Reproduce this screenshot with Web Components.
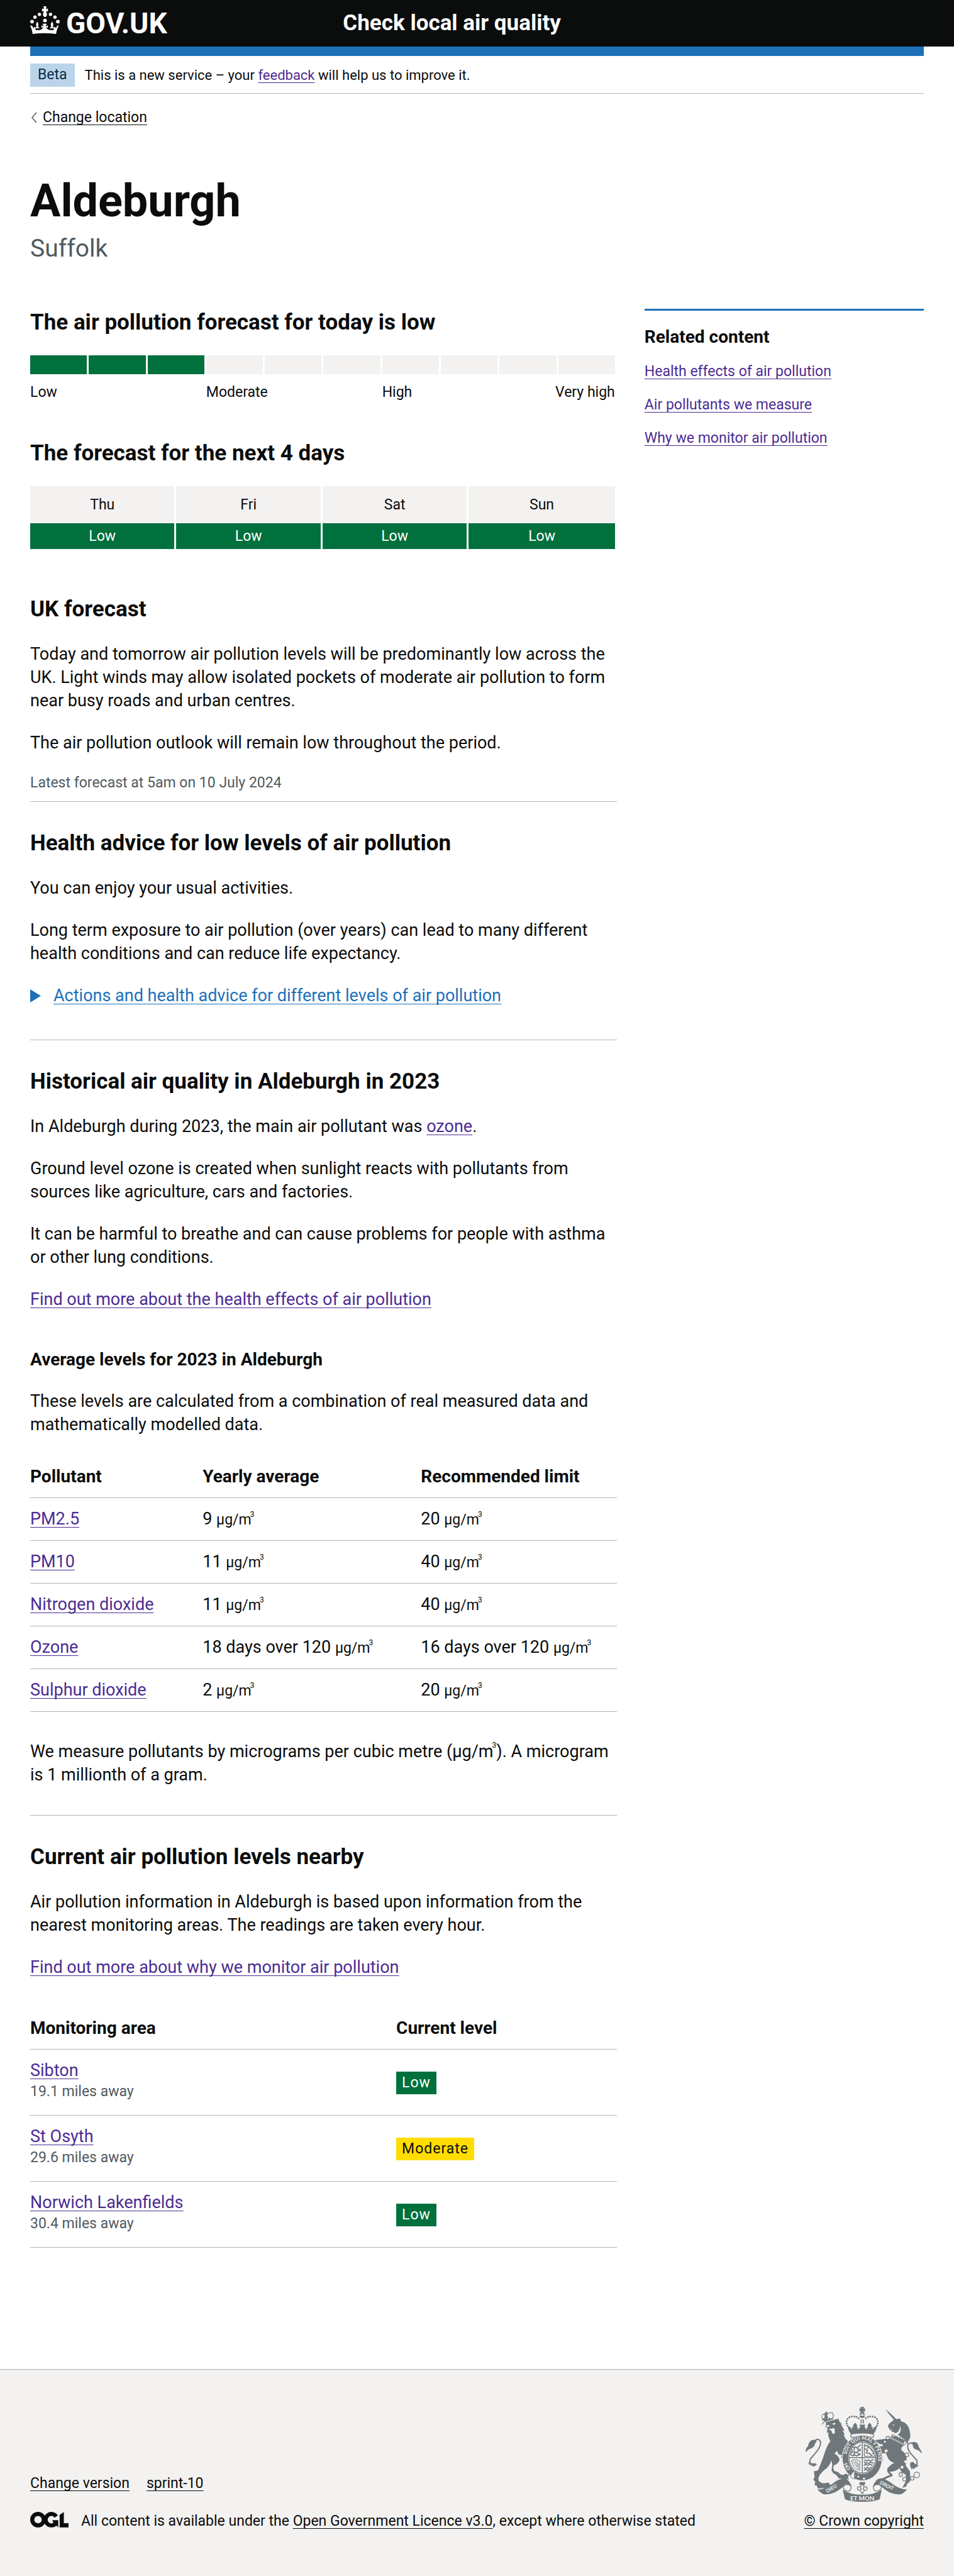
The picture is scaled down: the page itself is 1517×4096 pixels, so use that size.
<!DOCTYPE html>
<html lang="en">
<head>
<meta charset="utf-8">
<meta name="viewport" content="width=device-width, initial-scale=1">
<title>Air quality in Aldeburgh – Check local air quality</title>
<style>
  :root {
    --ink: #0b0c0c; --muted: #505a5f; --blue: #1d70b8; --visited: #4c2c92;
    --green: #00703c; --yellow: #ffdd00; --line: #b1b4b6; --pale: #f3f2f1;
    --gutter: 48px;
  }
  body { margin: 0; background: #fff; color: var(--ink); font: 27px/37px Roboto, "Liberation Sans", sans-serif; }
</style>
</head>
<body>
<air-page>
  <site-header slot="header" service="Check local air quality"></site-header>
  <phase-banner slot="header"></phase-banner>
  <back-link slot="header" href="#locations">Change location</back-link>
  <place-heading slot="header" place="Aldeburgh" region="Suffolk"></place-heading>

  <today-scale level="3" label="low"></today-scale>
  <day-forecast days="Thu,Fri,Sat,Sun" levels="Low,Low,Low,Low"></day-forecast>
  <uk-forecast></uk-forecast>
  <health-advice></health-advice>
  <historical-quality></historical-quality>
  <nearby-levels></nearby-levels>

  <related-content slot="aside"></related-content>
  <site-footer slot="footer"></site-footer>
</air-page>

<script>
const base = `
  * { box-sizing: border-box; }
  :host { display: block; }
  h1, h2, h3, p, ul, table { margin: 0; padding: 0; }
  ul { list-style: none; }
  h2 { font-size: 35px; line-height: 44px; font-weight: 700; margin-bottom: 31px; }
  h3 { font-size: 28px; line-height: 37px; font-weight: 700; margin-bottom: 30px; }
  p + p { margin-top: 30px; }
  a { color: var(--visited); text-decoration: underline 1px; text-underline-offset: 4px; text-decoration-skip-ink: none; }
  .plain { color: var(--ink); }
  .small { font-size: 23px; line-height: 30px; }
  .muted { color: var(--muted); }
  .ruled { border-top: 1px solid var(--line); padding-top: 44px; }
  table { width: 100%; border-collapse: separate; border-spacing: 0; table-layout: fixed; text-align: left; }
  th { font-size: 28px; font-weight: 700; }
  th, td { padding: 15px 15px 15px 0; border-bottom: 1px solid var(--line); line-height: 37px; }
  .unit { font-size: 23px; line-height: 23px; white-space: nowrap; }
  sup { font-size: 12px; line-height: 0; vertical-align: 12px; margin-left: -2px; }
`;

function define(name, css, html) {
  customElements.define(name, class extends HTMLElement {
    connectedCallback() {
      if (this.shadowRoot) return;
      const template = document.createElement('template');
      template.innerHTML = `<style>${base}${css}</style>${typeof html === 'function' ? html(this) : html}`;
      this.attachShadow({ mode: 'open' }).append(template.content.cloneNode(true));
    }
  });
}

define('air-page', `
  .columns { display: grid; grid-template-columns: 21fr 10fr; gap: 44px; align-items: start; padding: 74px var(--gutter) 193px; }
  main { min-width: 0; }
`, `
  <slot name="header"></slot>
  <div class="columns"><main><slot></slot></main><slot name="aside"></slot></div>
  <slot name="footer"></slot>
`);

define('site-header', `
  header { background: var(--ink); color: #fff; padding: 10px var(--gutter); display: grid; grid-template-columns: 35% 65%; }
  a { color: #fff; text-decoration: none; font-weight: 700; line-height: 54px; }
  .logo { display: flex; gap: 10px; font-size: 46px; }
  .logo svg { width: 47px; height: 44px; flex: none; }
  .service { font-size: 35px; }
  .bar { height: 15px; margin: 0 var(--gutter); background: var(--blue); }
`, host => `
  <header>
    <a class="logo" href="#home" aria-label="GOV.UK"><svg viewBox="72 42 192 179" fill="#fff" aria-hidden="true">
      <circle cx="84" cy="141" r="12"/><circle cx="103" cy="112" r="11"/><circle cx="132" cy="94" r="11"/>
      <circle cx="204" cy="94" r="11"/><circle cx="233" cy="112" r="11"/><circle cx="252" cy="141" r="12"/>
      <circle cx="168" cy="134" r="12"/>
      <path d="M158 42h20l-4 18 13-4v20l-12-4c1 8 6 14 6 24 0 9-6 15-13 15s-13-6-13-15c0-10 5-16 6-24l-12 4V56l13 4z"/>
      <path d="M74 166l17 5-5 3 9 12 1-10 9 1c-2 14 4 21 10 20 6-1 6-8 1-14-5 0-8 3-9 6-3-9 1-15 8-14-9-13-4-24 3-33 7 9 12 20 3 33 7-1 11 5 8 14-1-3-4-6-9-6-4 8-2 14 4 14 15 0 28-8 35-20-6 0-10 3-13 7v-20c3 4 8 6 14 6l-8-15h28l-8 15c6 0 11-2 14-6v20c-3-4-7-7-13-7 7 12 20 20 35 20 6 0 8-6 4-14-5 0-8 3-9 6-3-9 1-15 8-14-9-13-4-24 3-33 7 9 12 20 3 33 7-1 11 5 8 14-1-3-4-6-9-6-5 6-5 13 1 14 6 1 12-6 10-20l9-1 1 10 9-12-5-3 17-5c-9 17-15 35-18 55q-76-9-152 0c-3-20-8-38-17-55z"/>
    </svg><span>GOV.UK</span></a>
    <a class="service" href="#service">${host.getAttribute('service')}</a>
  </header>
  <div class="bar"></div>
`);

define('phase-banner', `
  :host { margin: 0 var(--gutter); padding: 12px 0 10px; border-bottom: 1px solid var(--line); }
  .row { display: flex; align-items: center; gap: 16px; }
  .row span { font-size: 22px; }
  strong { font-weight: 400; background: #bbd4ea; color: #0c2d4a; padding: 3px 12px 4px; }
`, `<div class="row small"><strong>Beta</strong><span>This is a new service – your <a href="#feedback">feedback</a> will help us to improve it.</span></div>`);

define('back-link', `
  :host { padding: 23px var(--gutter) 0; }
  .row { display: flex; align-items: center; gap: 9px; }
  svg { width: 11px; height: 18px; }
`, host => `
  <div class="row small">
    <svg viewBox="0 0 11 18" fill="none" stroke="#505a5f" stroke-width="1.5" aria-hidden="true"><path d="M10 1L3 9l7 8"/></svg>
    <a class="plain" href="${host.getAttribute('href')}"><slot></slot></a>
  </div>
`);

define('place-heading', `
  :host { padding: 81px var(--gutter) 0; }
  h1 { font-size: 72px; line-height: 74px; margin-bottom: 16px; }
  p { font-size: 39px; line-height: 44px; }
`, host => `<h1>${host.getAttribute('place')}</h1><p class="muted">${host.getAttribute('region')}</p>`);

define('today-scale', `
  h2 { margin-bottom: 30px; }
  .bar, .labels { display: grid; grid-template-columns: repeat(10, minmax(0, 1fr)); gap: 3px; margin-right: 3px; }
  .bar i { height: 30px; background: var(--pale); }
  .bar i.on { background: var(--green); }
  .labels { margin-top: 14px; white-space: nowrap; }
  .labels span { grid-column: span 3; }
  .labels span:nth-child(n+3) { grid-column: span 2; }
  .labels span:last-child { text-align: right; }
`, host => `
  <h2>The air pollution forecast for today is ${host.getAttribute('label')}</h2>
  <div class="bar">${Array.from({ length: 10 }, (_, i) => `<i${i < +host.getAttribute('level') ? ' class="on"' : ''}></i>`).join('')}</div>
  <div class="labels small"><span>Low</span><span>Moderate</span><span>High</span><span>Very high</span></div>
`);

define('day-forecast', `
  :host { margin-top: 60px; }
  h2 { margin-bottom: 30px; }
  .wrap { margin-right: 3px; }
  th, td { font-size: 23px; font-weight: 400; text-align: center; border: 0; border-right: 3px solid #fff; line-height: 30px; }
  th:last-child, td:last-child { border-right: 0; }
  th { background: var(--pale); padding: 15px 0 14px; }
  td { background: var(--green); color: #fff; padding: 6px 0 5px; }
`, host => {
  const cells = (attr, tag) => host.getAttribute(attr).split(',').map(t => `<${tag}>${t}</${tag}>`).join('');
  return `<h2>The forecast for the next 4 days</h2>
    <div class="wrap"><table><thead><tr>${cells('days', 'th')}</tr></thead><tbody><tr>${cells('levels', 'td')}</tr></tbody></table></div>`;
});

define('uk-forecast', `
  :host { margin-top: 74px; padding-bottom: 14px; }
`, `
  <h2>UK forecast</h2>
  <p>Today and tomorrow air pollution levels will be predominantly low across the UK. Light winds may allow isolated pockets of moderate air pollution to form near busy roads and urban centres.</p>
  <p>The air pollution outlook will remain low throughout the period.</p>
  <p class="small muted">Latest forecast at 5am on 10 July 2024</p>
`);

define('health-advice', `
  :host { padding-bottom: 51px; }
  details { margin-top: 30px; }
  summary { display: flex; align-items: center; gap: 20px; color: var(--blue); cursor: pointer; list-style: none; }
  summary span { text-decoration: underline 1px; text-underline-offset: 4px; text-decoration-skip-ink: none; }
  svg { width: 17px; height: 21px; flex: none; }
`, `
  <div class="ruled">
    <h2>Health advice for low levels of air pollution</h2>
    <p>You can enjoy your usual activities.</p>
    <p>Long term exposure to air pollution (over years) can lead to many different health conditions and can reduce life expectancy.</p>
    <details><summary><svg viewBox="0 0 17 21" fill="#1d70b8" aria-hidden="true"><path d="M0 0l17 10.500L0 21z"/></svg><span>Actions and health advice for different levels of air pollution</span></summary></details>
  </div>
`);

const unit = '<span class="unit">µg/m<sup>3</sup></span>';
const pollutants = [
  ['PM2.5', '9', '20'], ['PM10', '11', '40'], ['Nitrogen dioxide', '11', '40'],
  ['Ozone', '18 days over 120', '16 days over 120'], ['Sulphur dioxide', '2', '20'],
];

define('historical-quality', `
  :host { padding-bottom: 45px; }
  h3 { margin-top: 58px; }
  table { margin: 30px 0 45px; }
  th:first-child { width: 29.4%; }
  th:nth-child(2) { width: 37.2%; }
  th:last-child { width: 33.4%; }
  th, td { padding-right: 0; }
  p sup { vertical-align: 15px; }
`, `
  <div class="ruled">
    <h2>Historical air quality in Aldeburgh in 2023</h2>
    <p>In Aldeburgh during 2023, the main air pollutant was <a href="#ozone">ozone</a>.</p>
    <p>Ground level ozone is created when sunlight reacts with pollutants from sources like agriculture, cars and factories.</p>
    <p>It can be harmful to breathe and can cause problems for people with asthma or other lung conditions.</p>
    <p><a href="#health-effects">Find out more about the health effects of air pollution</a></p>
    <h3>Average levels for 2023 in Aldeburgh</h3>
    <p>These levels are calculated from a combination of real measured data and mathematically modelled data.</p>
    <table>
      <thead><tr><th>Pollutant</th><th>Yearly average</th><th>Recommended limit</th></tr></thead>
      <tbody>${pollutants.map(([n, a, l]) => `<tr><td><a href="#pollutant">${n}</a></td><td>${a} ${unit}</td><td>${l} ${unit}</td></tr>`).join('')}</tbody>
    </table>
    <p>We measure pollutants by micrograms per cubic metre (µg/m<sup>3</sup>). A microgram is 1 millionth of a gram.</p>
  </div>
`);

const areas = [['Sibton', '19.1', 'Low'], ['St Osyth', '29.6', 'Moderate'], ['Norwich Lakenfields', '30.4', 'Low']];

define('nearby-levels', `
  table { margin-top: 44px; }
  th:first-child { width: 62.4%; }
  th:last-child { width: 37.6%; }
  td { padding-bottom: 22px; vertical-align: top; }
  td:last-child { vertical-align: middle; padding: 0; }
  .distance { display: block; }
  .tag { display: inline-block; padding: 3px 9px; background: var(--green); color: #fff; letter-spacing: 1px; vertical-align: middle; }
  .tag.moderate { background: var(--yellow); color: var(--ink); }
`, `
  <div class="ruled">
    <h2>Current air pollution levels nearby</h2>
    <p>Air pollution information in Aldeburgh is based upon information from the nearest monitoring areas. The readings are taken every hour.</p>
    <p><a href="#monitoring">Find out more about why we monitor air pollution</a></p>
    <table>
      <thead><tr><th>Monitoring area</th><th>Current level</th></tr></thead>
      <tbody>${areas.map(([n, d, l]) => `<tr><td><a href="#area">${n}</a><span class="distance small muted">${d} miles away</span></td><td><span class="tag small ${l.toLowerCase()}">${l}</span></td></tr>`).join('')}</tbody>
    </table>
  </div>
`);

define('related-content', `
  aside { border-top: 3px solid var(--blue); padding-top: 23px; }
  h3 { margin-bottom: 22px; }
  ul { display: grid; gap: 23px; }
`, `
  <aside>
    <h3>Related content</h3>
    <ul class="small">
      <li><a href="#health-effects">Health effects of air pollution</a></li>
      <li><a href="#pollutants">Air pollutants we measure</a></li>
      <li><a href="#monitoring">Why we monitor air pollution</a></li>
    </ul>
  </aside>
`);

define('royal-arms', `
  svg { display: block; width: 185px; height: 151px; }
  text { font: 700 32px Lato, sans-serif; fill: #f3f2f1; }
`, `
  <svg viewBox="204 197 751 613" fill="#6f777b" aria-hidden="true">
    <!-- crown -->
    <path d="M557 198h26l-6 13 11-7v25l-11-7 6 14h-26l6-14-11 7v-25l11 7zM551 248q4-15 16-18v18zM572 230q12 3 16 18h-16zM551 254h37q-2 14-18 16-17-2-19-16z"/>
    <g fill="none" stroke="#6f777b" stroke-width="12" stroke-linecap="round" stroke-dasharray="0 15.500">
      <path d="M484 331C456 305 466 262 505 260q34-3 44 16"/><path d="M655 331c28-26 18-69-21-71q-34-3-44 16"/>
    </g>
    <path d="M559 278h7v27h-7zM573 278h7v27h-7z"/>
    <path d="M477 322l14 6q9 13 17 13l-8-13h14l-5-11 15-18 14 18-5 11h10l-5 14q11-1 18-13l-4-17h37l-4 17q7 12 18 13l-5-14h10l-5-11 14-18 15 18-5 11h14l-8 13q8 0 17-13l14-6q-2 25-22 52-71-15-145 0-20-27-20-52z"/>
    <path d="M499 373q71-12 142 0 7 10-2 21-69-17-139 0-9-11-1-21z" fill="#f3f2f1" stroke="#6f777b" stroke-width="5"/>
    <!-- lion -->
    <g fill="none" stroke="#6f777b" stroke-width="8" stroke-dasharray="1 12" stroke-linecap="round"><path d="M314 282q-14-34 12-40l50-8q12 16 4 38"/></g>
    <path d="M331 233l6-7 7 5-3 9 10 2-8 8 8 20-26 6 2-25-8-6 11-3zM312 272l14-3 3 9 12-11 6 11 12-13 6 10 13-9 5 11-56 17z"/>
    <path d="M304 316l21-18 91-25 4 14 17 22-4 2 23 42-14-6 16 31-10-3 14 28 12 12 18 50-19 2-20-20 36 40-12 0 6 54 3 38-14-8-4-8-17 3 4-18-16-4 10-12-17-8 8-14-22-5-12-24-16 18q28 12 34 40-8 26-38 36-8 22 6 38 20 0 34 17 24 14 34-3l25 11-8 14 9 16-13-6-9 12-9-9-14 6-1-10-22-2q-14-26-34-32l-12-18 4-42-6-24q-12 42-46 62l-28 30q-12 20-8 38 18 26 62 12l14 14-8 22-12-6-10 14-16-8-34 4-8-20-14-2 4-22-12-14 8-16-4-38 26-6q30-70 42-110 14-46 38-80-18-30-12-56l-10 4 4-42-14 12 4-36-18-5z"/>
    <path d="M334 319l18-5 8 9q-14 6-26-4zM376 306l18-6 2 10q-12 6-20-4zM356 336q12 8 30-3 9 8 5 16 7 14-5 23-13-2-12-14-2-10-14-12z" fill="#f3f2f1"/>
    <path d="M238 570q-12-20-2-38 28-30 50-60 26-44 6-62-18-8-30 10" fill="none" stroke="#6f777b" stroke-width="8"/>
    <path d="M276 418q-14-14-36-4-18 12-20 38-18 12-15 39 14-20 34-25 20-6 26-30zM230 554q22 14 42 5l-4 10 12-4q-14 20-36 16l3-8-22 1 6-7-12-9z"/>
    <!-- unicorn -->
    <path d="M720 212q36 30 84 78l-12 8q-44-42-72-86zM814 271l6 20q32 2 50 40 12 30 10 60-12 30-14 28l-4 24q-14-38-44-52l-28-20q-12-2-14-10l-20-6 6-12-14 4-6-10 12-2q-12 0-20-6l8-22 22-18q8-12 36-14z"/>
    <path d="M762 315l14-5-2 8zM774 368q34 4 42-48 10 44-18 58z" fill="#f3f2f1"/>
    <path d="M748 400l92 46q-22 12-18 30 38 26 34 66l-6 34 28 38 2 62-22 20-4 16-26 8 12-22 16-30-8-36q-30-8-36-40-20 20-60 24-10 4 10 12l4 16q-32 10-70 34l-14-2-8 14-24-1 16-20q30-8 50-18 18-12 34-14-28-22-16-46l26-24 16-8q-30-10-40-30l-14-34q-16 2-26 4l8 28-8 4 10 18-10-5-4 12-20-30-2-22-12-18-8-28q20-10 50-6l4-12q-30-2-36-16l-30 2-1-10 30-6z"/>
    <path d="M763 374l94 50-14 20-90-46z" fill="#f3f2f1" stroke="#6f777b" stroke-width="4"/>
    <path d="M757 395l8-12 10 8 4-10 10 12 8-8 6 16 12-10 5 16 12-8 4 14 10-2-8 24z"/>
    <g fill="#f3f2f1"><circle cx="850" cy="551" r="9"/><circle cx="827" cy="587" r="9"/></g>
    <g fill="#f3f2f1" stroke="#6f777b" stroke-width="5"><circle cx="735" cy="398" r="11"/><circle cx="716" cy="423" r="9"/><circle cx="724" cy="482" r="12"/><circle cx="858" cy="507" r="12"/><ellipse cx="818" cy="634" rx="10" ry="13"/><circle cx="843" cy="664" r="12"/><circle cx="892" cy="658" r="12"/><circle cx="922" cy="637" r="18"/></g>
    <path d="M914 585q16-22 6-46-28-28-48-56-20-38 2-50 20-8 30 8" fill="none" stroke="#6f777b" stroke-width="8"/>
    <path d="M884 430q20-14 42 2 8 14 10 28l8 4-4 6q14 8 14 28-18-22-40-26-18-8-18-30zM880 556l-2 20 10 24 12-8 2 9 14-16 14-1-2-11 16-1q-34 2-44-20z"/>
    <!-- garter and shield -->
    <ellipse cx="570" cy="527" rx="129" ry="147" stroke="#f3f2f1" stroke-width="4"/>
    <ellipse cx="570" cy="525" rx="91" ry="105" fill="#f3f2f1"/>
    <ellipse cx="570" cy="525" rx="86" ry="100" fill="none" stroke="#6f777b" stroke-width="5"/>
    <path d="M567 424h6v202h-6zM484 522h172v6H484z"/>
    <g fill="none" stroke="#6f777b" stroke-width="7" stroke-linecap="round">
      <path d="M506 455l10 7 10-7 10 8 10-9 12-11M500 470l7 10M520 464l-3 12M540 466l5 9 12-5M495 484l11 8 12-7 12 8 14-10 14-5M497 496l-3 10 10 4M520 495l-4 10M540 495l5 8 12-2M507 513l14-5 12 6 20-8"/>
      <path d="M585 540l12 6 12-6 12 7 20-9M582 552l8 10 10-6 10 8 12-9 18 5M582 574l12-6 14 8 12-8 14 6M583 590l10 6 10-8 12 8 14-9M583 606l10-6 12 7 12-7"/>
      <path d="M590 450q14-8 24 7l20 24q12 8 4 20M587 468l18 10-10 16 26 6 10 12M610 456l-8 8"/>
    </g>
    <path d="M583 436v80h67M583 516v-78q55 18 67 78z" fill="none" stroke="#6f777b" stroke-width="4"/>
    <path d="M499 543q38-10 56 4l-3 60q-38-8-53-64zM510 548l36 50M522 546l25 42M534 546l15 31" fill="none" stroke="#6f777b" stroke-width="4"/>
    <path id="garter" d="M470 505A102 118 0 1 1 634 619" fill="none"/>
    <path id="buckle" d="M450 566Q466 606 500 636" fill="none"/>
    <text><textPath href="#garter">SOIT QUI MAL Y PENSE</textPath></text>
    <text><textPath href="#buckle">HO</textPath></text>
    <circle cx="544" cy="648" r="6" fill="#f3f2f1"/><circle cx="581" cy="660" r="7" fill="#f3f2f1"/>
    <path d="M498 652q-8-12 2-22 14-22 30-12-18 6-12 18l14 2-14 8q-4 12 8 12-16 10-28-6z" fill="#f3f2f1" stroke="#6f777b" stroke-width="4"/>
    <!-- motto ribbon -->
    <path d="M280 731q48-2 92-34 46-36 80-38 34 2 50 56l-28-18q-16-4-28 16-44 40-84 46-32 6-48 0-16-10-34-28zM860 731q-48-2-92-34-46-36-80-38-34 2-50 56l28-18q16-4 28 16 44 40 84 46 32 6 48 0 16-10 34-28z"/>
    <path d="M470 699q30 0 28 22-4 22-24 20-20-2-28-22 6-20 24-20zM670 699q-30 0-28 22 4 22 24 20 20-2 28-22-6-20-24-20z" fill="#f3f2f1" stroke="#6f777b" stroke-width="5"/>
    <path d="M444 732q50 34 126 32 76 2 126-32l-14 62q-42 18-112 16-70 2-112-16z"/>
    <path id="dieu" d="M344 752Q390 728 446 686" fill="none"/><path id="droit" d="M680 692Q740 730 806 748" fill="none"/>
    <text><textPath href="#dieu">DIEU</textPath></text>
    <text><textPath href="#droit">DROIT</textPath></text>
    <text x="570" y="800" text-anchor="middle" style="font-size:40px">ET MON</text>
    <path d="M552 683h36v18h-36z"/>
    <path d="M570 696q18 18 6 38 2-24 18-22 14 8 4 22h-14q-2 10-8 12 0 10-6 12-6-2-6-12-6-2-8-12h-14q-10-14 4-22 16-2 18 22-12-20 6-38z" fill="#f3f2f1" stroke="#6f777b" stroke-width="5"/>
  </svg>
`);

define('site-footer', `
  footer { border-top: 1px solid var(--line); background: var(--pale); padding: 59px var(--gutter) 73px; display: flex; justify-content: space-between; align-items: flex-end; gap: 44px; }
  .links { display: flex; gap: 27px; margin-bottom: 30px; }
  .licence { display: flex; gap: 20px; }
  .licence svg { width: 61px; height: 25px; flex: none; }
  .arms { display: flex; flex-direction: column; align-items: center; gap: 16px; white-space: nowrap; }
`, `
  <footer class="small">
    <div>
      <ul class="links"><li><a class="plain" href="#version">Change version</a></li><li><a class="plain" href="#sprint">sprint-10</a></li></ul>
      <div class="licence">
        <svg viewBox="72 60 246 101" role="img" aria-label="OGL">
          <circle cx="122" cy="110" r="37" fill="none" stroke="#0b0c0c" stroke-width="26"/>
          <path d="M239 90A37 37 0 1 0 238 132" fill="none" stroke="#0b0c0c" stroke-width="26"/>
          <path d="M214 114h38v46l-14-14-16-12zM261 79l27-18v72h30v27h-57z" fill="#0b0c0c"/>
        </svg>
        <span>All content is available under the <a class="plain" href="#ogl">Open Government Licence v3.0</a>, except where otherwise stated</span>
      </div>
    </div>
    <div class="arms"><royal-arms></royal-arms><a class="plain" href="#copyright">© Crown copyright</a></div>
  </footer>
`);
</script>
</body>
</html>
